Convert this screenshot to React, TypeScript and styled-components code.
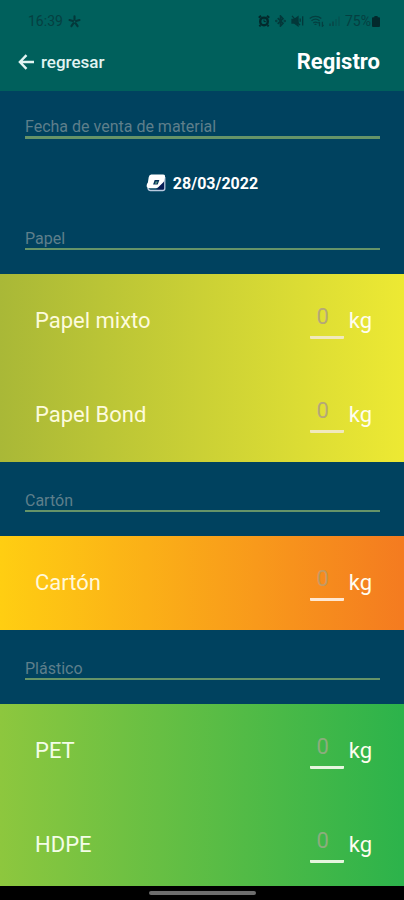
import React, { useState } from "react";
import styled, { createGlobalStyle } from "styled-components";

const GlobalStyle = createGlobalStyle`
  * { box-sizing: border-box; }
  body { margin: 0; background: #00425f; font-family: Roboto, "Liberation Sans", sans-serif; }
  button, input { font-family: inherit; }
`;

const Screen = styled.div`
  display: flex;
  flex-direction: column;
  height: 100vh;
  background: #00425f;
`;

const Header = styled.header`
  flex: none;
  background: #00605c;
  padding: 10px 24px 11px 18px;
`;

const StatusBar = styled.div`
  display: flex;
  align-items: center;
  justify-content: space-between;
  height: 22px;
  padding-left: 10px;
  font-size: 14px;
  color: #053f41;
`;

const StatusGroup = styled.div<{ $gap: number }>`
  display: flex;
  align-items: center;
  gap: ${(p) => p.$gap}px;
`;

const NavRow = styled.div`
  display: flex;
  align-items: center;
  justify-content: space-between;
  height: 48px;
  padding-top: 12px;
`;

const BackButton = styled.button`
  display: flex;
  align-items: center;
  gap: 7px;
  padding: 0;
  border: 0;
  background: none;
  color: #e2f4f2;
  font-size: 17px;
  font-weight: 500;
  line-height: 24px;
  cursor: pointer;
`;

const Title = styled.h1`
  margin: 0;
  color: #fff;
  font-size: 22px;
  font-weight: 700;
  line-height: 26px;
`;

const Content = styled.main`
  flex: 1;
  min-height: 0;
  overflow-y: auto;
  scrollbar-width: none;
`;

const Heading = styled.div<{ $first?: boolean }>`
  padding: ${(p) => (p.$first ? "27px 24px 0 25px" : "30px 24px 24px 25px")};
`;

const HeadingText = styled.h2<{ $first?: boolean }>`
  margin: 0;
  border-bottom: ${(p) => (p.$first ? 3 : 2)}px solid #669468;
  color: #5e7f8b;
  font-size: 16px;
  font-weight: 400;
  line-height: 18px;
`;

const DateRow = styled.div`
  display: flex;
  justify-content: center;
  padding: 34px 0 7px;
`;

const DateButton = styled.button`
  display: flex;
  align-items: center;
  gap: 7px;
  height: 20px;
  padding: 0;
  border: 0;
  background: none;
  color: #fff;
  font-size: 16px;
  font-weight: 700;
  cursor: pointer;
`;

const Panel = styled.div<{ $from: string; $to: string }>`
  background: linear-gradient(to right, ${(p) => p.$from}, ${(p) => p.$to});
`;

const Row = styled.div`
  display: flex;
  align-items: center;
  justify-content: space-between;
  height: 94px;
  padding: 0 32px 0 35px;
  font-size: 22px;
  line-height: 26px;
`;

const Name = styled.label<{ $color: string }>`
  color: ${(p) => p.$color};
`;

const Amount = styled.div`
  display: flex;
  align-items: center;
  gap: 5px;
  color: #fffdf0;
`;

const WeightInput = styled.input<{ $line: string; $hint: string }>`
  width: 34px;
  height: 36px;
  padding: 0 8px 6px 0;
  border: 0;
  border-bottom: 3px solid ${(p) => p.$line};
  border-radius: 1px;
  outline: 0;
  background: none;
  color: #fff;
  font-size: 22px;
  text-align: center;
  &::placeholder { color: ${(p) => p.$hint}; opacity: 1; }
`;

const HomeBar = styled.footer`
  flex: none;
  display: flex;
  justify-content: center;
  height: 14px;
  padding-top: 5px;
  background: #000;
`;

const HomeHandle = styled.div`
  width: 107px;
  height: 4px;
  border-radius: 2px;
  background: #6d6d6d;
`;

const ArrowIcon = () => (
  <svg width="16" height="16" viewBox="0 0 16 16" fill="none" stroke="currentColor" strokeWidth="2.4" aria-hidden="true">
    <path d="M8.5 1.2 1.9 8l6.6 6.800M2 8h14" />
  </svg>
);

const FlowerIcon = () => (
  <svg width="13" height="13" viewBox="0 0 13 13" stroke="#03383a" strokeWidth="2.1" strokeLinecap="round" aria-hidden="true">
    <path d="M6.5 4.800V1.300M4.900 6.100 1.500 5M8.100 6.100 11.500 5M5.500 8.100 3.400 11.200M7.500 8.100l2.100 3.100" />
  </svg>
);

const AlarmIcon = () => (
  <svg width="12" height="12" viewBox="0 0 12 12" fill="none" stroke="#03292c" aria-hidden="true">
    <circle cx="6" cy="6.4" r="3.8" strokeWidth="2.4" />
    <path d="M.8 2.8 3 .8M11.2 2.8 9 .8M2.4 10.2l-1 1.2M9.6 10.2l1 1.2" strokeWidth="2" />
    <path d="M6 4.4v2.2h1.8" strokeWidth="1" />
  </svg>
);

const BluetoothIcon = () => (
  <svg width="11" height="12" viewBox="0 0 11 12" fill="none" stroke="#03383a" strokeWidth="1.6" aria-hidden="true">
    <path d="M2.7 3.2 8 8.3 5.5 11V1L8 3.7 2.7 8.8" />
    <circle cx="1.3" cy="6" r=".4" />
    <circle cx="9.7" cy="6" r=".4" />
  </svg>
);

const MuteIcon = () => (
  <svg width="13" height="12" viewBox="0 0 13 12" fill="none" stroke="#03383a" strokeWidth="1.3" aria-hidden="true">
    <path d="M1 4.5h2.2L7 1.8v9L3.2 8H1z" fill="#03383a" />
    <path d="m1 .8 8 9.400M9.200 3.400v3.400M11.700 1.200v9.200" />
  </svg>
);

const WifiIcon = () => (
  <svg width="15" height="12" viewBox="0 0 15 12" fill="none" stroke="#043f40" strokeWidth="1.3" aria-hidden="true">
    <path d="M.7 3.6c3.3-2.9 8.3-2.9 11.6 0M2.5 5.8c2.4-2 5.6-2 8 0M4.3 8c1.4-1.1 3-1.1 4.4 0" />
    <path d="M6.5 8.4 8 10H5z" fill="#043f40" stroke="none" />
    <path d="M10.5 7v4.3M9.3 8.2 10.5 7M13.4 6.8v4.4l1.2-1.2" />
  </svg>
);

const SignalIcon = () => (
  <svg width="11" height="10" viewBox="0 0 11 10" fill="#064b4b" aria-hidden="true">
    <path d="M0 7.5h2V10H0zM3 5.5h2V10H3z" />
    <path d="M6 3h2v7H6zM9 .5h2V10H9z" opacity=".5" />
  </svg>
);

const BatteryIcon = () => (
  <svg width="8" height="11" viewBox="0 0 8 11" fill="#03292c" aria-hidden="true">
    <path d="M2.4 0h3.200v1.200H7a1 1 0 0 1 1 1V10a1 1 0 0 1-1 1H1a1 1 0 0 1-1-1V2.200a1 1 0 0 1 1-1h1.400z" />
  </svg>
);

const CalendarIcon = () => (
  <svg width="20" height="18" viewBox="0 0 20 18" aria-hidden="true">
    <path d="M16 6.5h3V17H9l3-3z" fill="#071c56" />
    <path d="M18.8 3v11.5q0 2-2 2H4.5Q2.5 16.5 1.8 14" fill="none" stroke="#b9cbe0" strokeWidth="1.3" />
    <path d="M5.2.5h12q2.200 0 1.900 2.200l-.8 3.700q-.3 1.400-1.400 2.400l-4.400 4.200q-1.200 1.200-2.900 1.200H3.200Q.3 14.200.7 11q.2-1.500 1.200-2.600l.8-5.200Q3.200.5 5.200.5z" fill="#fff" />
    <path d="M8.7 6h4.700l-1.700 4.600H7.100z" fill="#06315a" />
    <path d="M9.7 7.500h2l-1 2.300H8.900z" fill="#5c9b86" />
  </svg>
);

type Group = {
  title: string;
  from: string;
  to: string;
  name: string;
  line: string;
  hint: string;
  items: string[];
};

const groups: Group[] = [
  { title: "Papel", from: "#a9b837", to: "#ede933", name: "#fdfbdc", line: "#f1e9bd", hint: "#b5a878", items: ["Papel mixto", "Papel Bond"] },
  { title: "Cartón", from: "#ffce12", to: "#f47b20", name: "#fff8da", line: "#ffe8d2", hint: "#c39a62", items: ["Cartón"] },
  { title: "Plástico", from: "#8dc73e", to: "#2cb34b", name: "#f4fde8", line: "#e6f6df", hint: "#8bad7d", items: ["PET", "HDPE"] },
];

export default function App() {
  const [weights, setWeights] = useState<Record<string, string>>({});

  return (
    <>
      <GlobalStyle />
      <Screen>
        <Header>
          <StatusBar>
            <StatusGroup $gap={5}>
              <span>16:39</span>
              <FlowerIcon />
            </StatusGroup>
            <StatusGroup $gap={5}>
              <AlarmIcon />
              <BluetoothIcon />
              <MuteIcon />
              <WifiIcon />
              <SignalIcon />
              <StatusGroup $gap={1}>
                <span>75%</span>
                <BatteryIcon />
              </StatusGroup>
            </StatusGroup>
          </StatusBar>
          <NavRow>
            <BackButton type="button">
              <ArrowIcon />
              regresar
            </BackButton>
            <Title>Registro</Title>
          </NavRow>
        </Header>
        <Content>
          <Heading $first>
            <HeadingText $first>Fecha de venta de material</HeadingText>
          </Heading>
          <DateRow>
            <DateButton type="button">
              <CalendarIcon />
              28/03/2022
            </DateButton>
          </DateRow>
          {groups.map((group) => (
            <section key={group.title}>
              <Heading>
                <HeadingText>{group.title}</HeadingText>
              </Heading>
              <Panel $from={group.from} $to={group.to}>
                {group.items.map((item) => (
                  <Row key={item}>
                    <Name htmlFor={item} $color={group.name}>{item}</Name>
                    <Amount>
                      <WeightInput
                        id={item}
                        inputMode="decimal"
                        placeholder="0"
                        $line={group.line}
                        $hint={group.hint}
                        value={weights[item] ?? ""}
                        onChange={(e) => setWeights({ ...weights, [item]: e.target.value })}
                      />
                      <span>kg</span>
                    </Amount>
                  </Row>
                ))}
              </Panel>
            </section>
          ))}
        </Content>
        <HomeBar>
          <HomeHandle />
        </HomeBar>
      </Screen>
    </>
  );
}
